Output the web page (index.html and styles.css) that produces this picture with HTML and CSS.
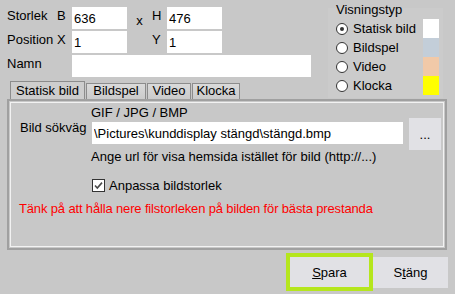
FILE: index.html
```html
<!DOCTYPE html>
<html>
<head>
<meta charset="UTF-8">
<title>Visning</title>
<link rel="stylesheet" href="styles.css">
</head>
<body>
<div class="head">
	<div class="left">
		<div class="fields">
			<span class="lbl">Storlek</span>
			<span class="lbl">B</span>
			<input class="field" value="636">
			<span class="times">x</span>
			<span class="lbl">H</span>
			<input class="field" value="476">

			<span class="lbl">Position</span>
			<span class="lbl">X</span>
			<input class="field" value="1">
			<span></span>
			<span class="lbl">Y</span>
			<input class="field" value="1">

			<span class="lbl">Namn</span>
			<span></span>
			<input class="field name" value="">
		</div>
		<div class="tabs">
			<div class="tab active tab-static">Statisk bild</div>
			<div class="tab tab-slides">Bildspel</div>
			<div class="tab tab-video">Video</div>
			<div class="tab tab-clock">Klocka</div>
		</div>
	</div>
	<div class="types">
		<div class="types-title">Visningstyp</div>
		<label class="type"><span class="radio checked"></span>Statisk bild<span class="swatch sw-white"></span></label>
		<label class="type"><span class="radio"></span>Bildspel<span class="swatch sw-blue"></span></label>
		<label class="type"><span class="radio"></span>Video<span class="swatch sw-peach"></span></label>
		<label class="type"><span class="radio"></span>Klocka<span class="swatch sw-yellow"></span></label>
	</div>
</div>

<div class="panel">
	<div class="pane">
		<span></span>
		<span class="formats">GIF / JPG / BMP</span>

		<span class="path-label">Bild sökväg</span>
		<div class="path-row">
			<input class="field path" value="\Pictures\kunddisplay stängd\stängd.bmp">
			<button class="browse">...</button>
		</div>

		<span></span>
		<span class="hint">Ange url för visa hemsida istället för bild (http://...)</span>

		<span></span>
		<label class="fit">
			<span class="check">
				<svg width="13" height="13" viewBox="0 0 13 13">
					<rect x="0.5" y="0.5" width="12" height="12" fill="#fff" stroke="#333"/>
					<path d="M3 6.5 L5.3 9 L10 3.6" fill="none" stroke="#4a4a4a" stroke-width="1.6"/>
				</svg>
			</span>
			Anpassa bildstorlek
		</label>

		<p class="warn">Tänk på att hålla nere filstorleken på bilden för bästa prestanda</p>
	</div>
</div>

<div class="footer">
	<button class="btn btn-save"><u>S</u>para</button>
	<button class="btn btn-close">S<u>t</u>äng</button>
</div>
</body>
</html>
```

FILE: styles.css
```css
body{
	margin: 0;
	width: 455px;
	height: 294px;
	overflow: hidden;
	background: #c8c8c8;
	color: #000;
	font-family: "Liberation Sans", Arial, sans-serif;
	font-size: 13px;
	line-height: 15px;
}
input,button{
	font-family: inherit;
	font-size: 13px;
	color: #000;
}

/* top part */
.head{
	display: grid;
	grid-template-columns: 328px 115px;
}
.left{
	padding-left: 7px;
}
.fields{
	display: grid;
	grid-template-columns: 50px 15px 55px 25px 15px 55px;
	grid-auto-rows: 22px;
	row-gap: 2px;
	margin-top: 7px;
}
.lbl{
	align-self: start;
	margin-top: 1px;
	white-space: nowrap;
}
.times{
	justify-self: center;
	align-self: end;
	margin-bottom: 1px;
}
.field{
	box-sizing: border-box;
	height: 22px;
	width: 55px;
	border: none;
	outline: none;
	background: #fff;
	padding: 0 2px;
	margin: 0;
}
.name{
	grid-column: 3 / -1;
	width: 239px;
}

.tabs{
	display: flex;
	align-items: flex-end;
	gap: 1px;
	margin-top: 4px;
	margin-left: 3px;
	height: 18px;
}
.tab{
	box-sizing: border-box;
	height: 16px;
	line-height: 14px;
	border: 1px solid #8c8c8c;
	border-bottom: none;
	background: linear-gradient(#dadada, #cbcbcb);
	text-align: center;
	white-space: nowrap;
}
.tab.active{
	height: 18px;
	padding-top: 2px;
	background: #cdcdcd;
}
.tab-static{width: 75px;}
.tab-slides{width: 60px;}
.tab-video{width: 44px;}
.tab-clock{width: 48px;}

/* display type group */
.types{
	box-sizing: border-box;
	height: 98px;
	padding: 2px 4px 0 8px;
	background: linear-gradient(to bottom, transparent 8px, #cbcbcb 8px);
}
.types-title{
	margin-bottom: 2px;
}
.type{
	display: flex;
	align-items: center;
	height: 19px;
	gap: 5px;
}
.radio{
	box-sizing: border-box;
	width: 12px;
	height: 12px;
	border: 1px solid #333;
	border-radius: 50%;
	background: #fff;
	display: flex;
	align-items: center;
	justify-content: center;
}
.radio.checked:after{
	content: '';
	width: 4px;
	height: 4px;
	border-radius: 50%;
	background: #333;
}
.swatch{
	margin-left: auto;
	width: 16px;
	height: 19px;
}
.sw-white{background: #fff;}
.sw-blue{background: #c3ced9;}
.sw-peach{background: #f1c9a8;}
.sw-yellow{background: #ffff00;}

/* tab page */
.panel{
	box-sizing: border-box;
	margin-left: 7px;
	width: 440px;
	height: 151px;
	border: 2px solid #a0a0a0;
	box-shadow: inset 0 0 0 1px #c8c8c8, inset 0 0 0 2px #f2f2f2;
}
.pane{
	display: grid;
	grid-template-columns: 71px 1fr;
	padding: 4px 0 0 11px;
}
.formats{
	height: 15px;
}
.path-label{
	align-self: start;
	white-space: nowrap;
}
.path-row{
	display: flex;
	margin-top: 2px;
	height: 22px;
}
.path{
	width: 311px;
	margin-left: 1px;
}
.browse{
	box-sizing: border-box;
	width: 32px;
	height: 32px;
	margin: -4px 0 -6px 6px;
	border: none;
	background: #e1e1e5;
	padding: 0;
}
.hint{
	margin-top: 5px;
	white-space: nowrap;
}
.fit{
	display: flex;
	align-items: center;
	gap: 4px;
	margin-top: 15px;
	margin-left: 1px;
	height: 13px;
}
.check{
	display: flex;
}
.warn{
	grid-column: 1 / -1;
	margin: 9px 0 0 -1px;
	color: #ff0000;
	letter-spacing: -0.15px;
	white-space: nowrap;
}

/* buttons */
.footer{
	display: flex;
	justify-content: flex-end;
	align-items: center;
	margin-top: 3px;
	padding-right: 7px;
}
.btn{
	box-sizing: border-box;
	border: none;
	background: #e1e1e5;
	padding: 0;
}
.btn-save{
	width: 87px;
	height: 38px;
	border: 4px solid #b5e61d;
}
.btn-close{
	width: 75px;
	height: 31px;
}
```
